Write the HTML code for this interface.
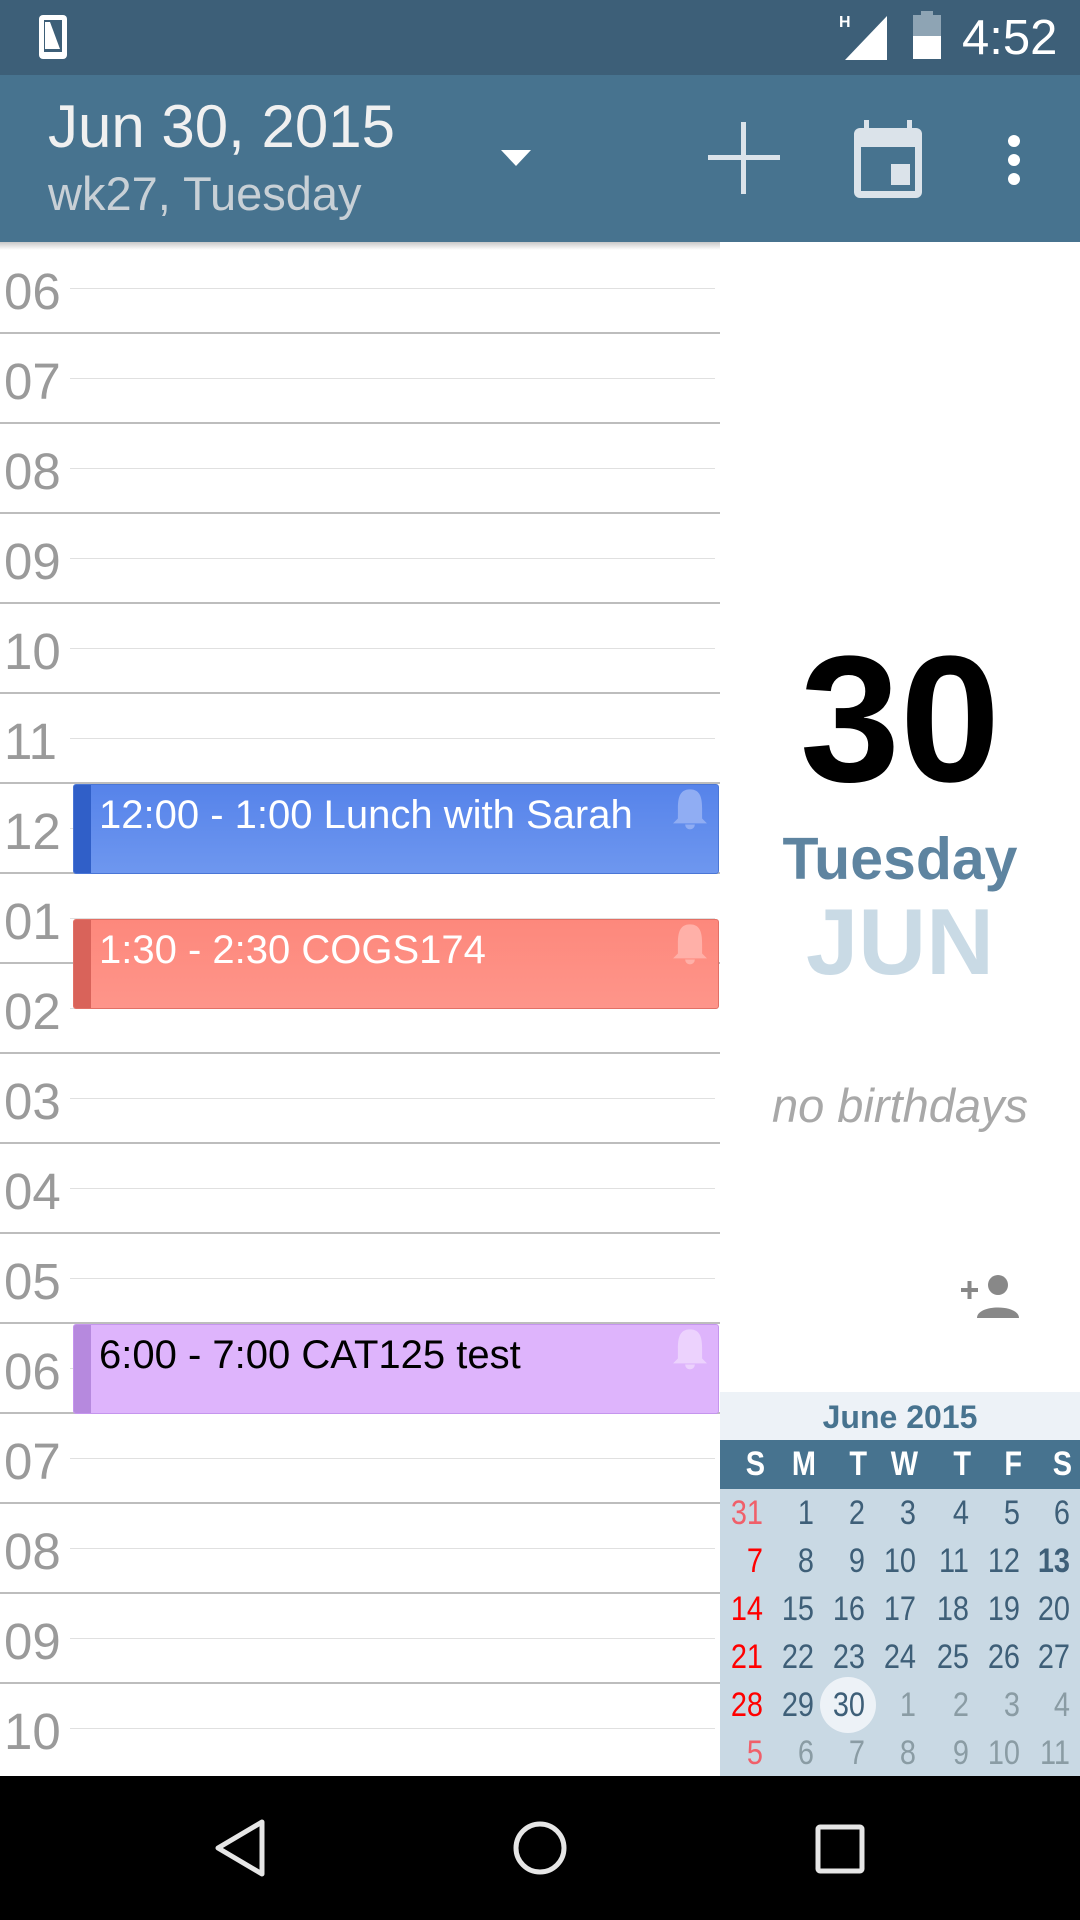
<!DOCTYPE html>
<html><head><meta charset="utf-8"><style>
*{margin:0;padding:0;box-sizing:border-box}
body{width:1080px;height:1920px;position:relative;overflow:hidden;background:#fff;font-family:"Liberation Sans",sans-serif}
.abs{position:absolute}
.lbl{position:absolute;left:4px;font-size:51px;color:#9a9a9a;line-height:1}
.maj{position:absolute;left:0;width:720px;height:2px;background:#bdbdbd}
.half{position:absolute;left:70px;width:645px;height:1px;background:#e0e0e0}
.ev{position:absolute;left:73px;width:646px;height:90px;border-radius:3px;overflow:hidden}
.ev .st{position:absolute;left:0;top:0;bottom:0;width:17px}
.ev .tx{position:absolute;left:25px;top:8px;font-size:40px;white-space:nowrap}
.ev svg{position:absolute;right:8px;top:2px}
.cal{position:absolute;left:720px;top:1392px;width:360px;height:384px;background:#c9d9e4;overflow:hidden}
.row{position:absolute;left:4px;width:360px;height:48px}
.row span{position:absolute;width:51px;text-align:right;font-size:34px;line-height:48px;color:#3e5f78;transform:scaleX(0.85);transform-origin:right}
</style></head><body>
<div class="abs" style="left:0;top:0;width:1080px;height:75px;background:#3d5f78"></div>
<svg class="abs" style="left:38px;top:14px" width="32" height="46" viewBox="0 0 32 46"><rect x="1" y="1" width="28" height="44" rx="4" fill="#fff"/><rect x="6" y="6" width="18" height="32" fill="#3d5f78"/><path d="M7 8 L12 8 L22 35 L7 35Z" fill="#fff"/></svg>
<div class="abs" style="left:839px;top:14px;font-size:16px;color:#fff;font-weight:bold">H</div>
<svg class="abs" style="left:845px;top:16px" width="44" height="44"><path d="M42 0 L42 44 L0 44Z" fill="#fff"/></svg>
<div class="abs" style="left:913px;top:15px;width:28px;height:44px;background:#fff"></div>
<div class="abs" style="left:913px;top:15px;width:28px;height:21px;background:#8ea4b4"></div>
<div class="abs" style="left:921px;top:11px;width:12px;height:5px;background:#8ea4b4"></div>
<div class="abs" style="left:962px;top:12px;font-size:49px;color:#fff;line-height:52px">4:52</div>
<div class="abs" style="left:0;top:75px;width:1080px;height:167px;background:#47738f"></div>
<div class="abs" style="left:0;top:242px;width:720px;height:8px;background:linear-gradient(#c8c8c8,#fff)"></div>
<div class="abs" style="left:48px;top:94px;font-size:60px;color:#f0f0f0;line-height:66px">Jun 30, 2015</div>
<div class="abs" style="left:48px;top:166px;font-size:47px;color:#c8d0d6;line-height:56px">wk27, Tuesday</div>
<svg class="abs" style="left:501px;top:150px" width="30" height="16"><path d="M0 0 L30 0 L15 16Z" fill="#fff"/></svg>
<svg class="abs" style="left:708px;top:122px" width="72" height="72"><rect x="33" y="0" width="5" height="72" fill="#dbe3ea"/><rect x="0" y="33" width="72" height="5" fill="#dbe3ea"/></svg>
<svg class="abs" style="left:852px;top:120px" width="72" height="80" viewBox="0 0 72 80"><rect x="12" y="0" width="5" height="14" fill="#dbe3ea"/><rect x="55" y="0" width="5" height="14" fill="#dbe3ea"/><rect x="2" y="8" width="68" height="70" rx="6" fill="#dbe3ea"/><rect x="9" y="27" width="54" height="44" fill="#47738f"/><rect x="39" y="44" width="19" height="21" fill="#dbe3ea"/></svg>
<svg class="abs" style="left:1004px;top:134px" width="20" height="52"><circle cx="10" cy="7" r="6" fill="#fff"/><circle cx="10" cy="26" r="6" fill="#fff"/><circle cx="10" cy="45" r="6" fill="#fff"/></svg>

<div class="lbl" style="top:266px">06</div><div class="half" style="top:288px"></div><div class="maj" style="top:332px"></div>
<div class="lbl" style="top:356px">07</div><div class="half" style="top:378px"></div><div class="maj" style="top:422px"></div>
<div class="lbl" style="top:446px">08</div><div class="half" style="top:468px"></div><div class="maj" style="top:512px"></div>
<div class="lbl" style="top:536px">09</div><div class="half" style="top:558px"></div><div class="maj" style="top:602px"></div>
<div class="lbl" style="top:626px">10</div><div class="half" style="top:648px"></div><div class="maj" style="top:692px"></div>
<div class="lbl" style="top:716px">11</div><div class="half" style="top:738px"></div><div class="maj" style="top:782px"></div>
<div class="lbl" style="top:806px">12</div><div class="half" style="top:828px"></div><div class="maj" style="top:872px"></div>
<div class="lbl" style="top:896px">01</div><div class="half" style="top:918px"></div><div class="maj" style="top:962px"></div>
<div class="lbl" style="top:986px">02</div><div class="half" style="top:1008px"></div><div class="maj" style="top:1052px"></div>
<div class="lbl" style="top:1076px">03</div><div class="half" style="top:1098px"></div><div class="maj" style="top:1142px"></div>
<div class="lbl" style="top:1166px">04</div><div class="half" style="top:1188px"></div><div class="maj" style="top:1232px"></div>
<div class="lbl" style="top:1256px">05</div><div class="half" style="top:1278px"></div><div class="maj" style="top:1322px"></div>
<div class="lbl" style="top:1346px">06</div><div class="half" style="top:1368px"></div><div class="maj" style="top:1412px"></div>
<div class="lbl" style="top:1436px">07</div><div class="half" style="top:1458px"></div><div class="maj" style="top:1502px"></div>
<div class="lbl" style="top:1526px">08</div><div class="half" style="top:1548px"></div><div class="maj" style="top:1592px"></div>
<div class="lbl" style="top:1616px">09</div><div class="half" style="top:1638px"></div><div class="maj" style="top:1682px"></div>
<div class="lbl" style="top:1706px">10</div><div class="half" style="top:1728px"></div>

<div class="ev" style="top:784px;background:linear-gradient(#5683ea,#6e97ef);border:1px solid #4a76d6">
<div class="st" style="background:#305fc8"></div><div class="tx" style="color:#fff">12:00 - 1:00 Lunch with Sarah</div>
<svg width="40" height="46" viewBox="0 0 30 38"><path d="M15 2 C6 2 5 10 5 18 L5 26 L1 30 L29 30 L25 26 L25 18 C25 10 24 2 15 2Z M11 31 a4 4 0 0 0 8 0Z" fill="#90adf3"/></svg></div>
<div class="ev" style="top:919px;background:linear-gradient(#fd887c,#fe958a);border:1px solid #e27066">
<div class="st" style="background:#d9635a"></div><div class="tx" style="color:#fff">1:30 - 2:30 COGS174</div>
<svg width="40" height="46" viewBox="0 0 30 38"><path d="M15 2 C6 2 5 10 5 18 L5 26 L1 30 L29 30 L25 26 L25 18 C25 10 24 2 15 2Z M11 31 a4 4 0 0 0 8 0Z" fill="#ffb0a8"/></svg></div>
<div class="ev" style="top:1324px;background:#deb4fc;border:1px solid #c595ee">
<div class="st" style="background:#b689de"></div><div class="tx" style="color:#000">6:00 - 7:00 CAT125 test</div>
<svg width="40" height="46" viewBox="0 0 30 38"><path d="M15 2 C6 2 5 10 5 18 L5 26 L1 30 L29 30 L25 26 L25 18 C25 10 24 2 15 2Z M11 31 a4 4 0 0 0 8 0Z" fill="#ecd2fd"/></svg></div>

<div class="abs" style="left:720px;top:630px;width:360px;text-align:center;font-size:180px;font-weight:bold;color:#000;line-height:180px">30</div>
<div class="abs" style="left:720px;top:824px;width:360px;text-align:center;font-size:59px;font-weight:bold;color:#5e84a0;line-height:70px">Tuesday</div>
<div class="abs" style="left:720px;top:892px;width:360px;text-align:center;font-size:94px;font-weight:bold;color:#c9dae5;line-height:100px">JUN</div>
<div class="abs" style="left:720px;top:1079px;width:360px;text-align:center;font-size:47px;font-style:italic;color:#a8a8a8;line-height:54px">no birthdays</div>
<svg class="abs" style="left:961px;top:1274px" width="58" height="44" viewBox="0 0 58 44"><rect x="0" y="14" width="17" height="4" fill="#888"/><rect x="6.5" y="7" width="4" height="18" fill="#888"/><circle cx="37" cy="11" r="10" fill="#888"/><path d="M16 44 C16 30 58 30 58 44Z" fill="#888"/></svg>

<div class="cal">
<div class="abs" style="left:0;top:0;width:360px;height:48px;background:#edf2f7;text-align:center;font-size:32px;font-weight:bold;color:#47738f;line-height:50px">June 2015</div>
<div class="abs" style="left:0;top:48px;width:360px;height:49px;background:#47738f"></div>
<div class="row" style="top:48px"><span style="left:-10px;color:#fff;font-weight:bold">S</span><span style="left:41px;color:#fff;font-weight:bold">M</span><span style="left:92px;color:#fff;font-weight:bold">T</span><span style="left:143px;color:#fff;font-weight:bold">W</span><span style="left:196px;color:#fff;font-weight:bold">T</span><span style="left:247px;color:#fff;font-weight:bold">F</span><span style="left:297px;color:#fff;font-weight:bold">S</span></div>
<div class="row" style="top:97px"><span style="left:-12px;color:#f0606a">31</span><span style="left:39px">1</span><span style="left:90px">2</span><span style="left:141px">3</span><span style="left:194px">4</span><span style="left:245px">5</span><span style="left:295px">6</span></div>
<div class="row" style="top:145px"><span style="left:-12px;color:#f00">7</span><span style="left:39px">8</span><span style="left:90px">9</span><span style="left:141px">10</span><span style="left:194px">11</span><span style="left:245px">12</span><span style="left:295px;font-weight:bold">13</span></div>
<div class="row" style="top:193px"><span style="left:-12px;color:#f00">14</span><span style="left:39px">15</span><span style="left:90px">16</span><span style="left:141px">17</span><span style="left:194px">18</span><span style="left:245px">19</span><span style="left:295px">20</span></div>
<div class="row" style="top:241px"><span style="left:-12px;color:#f00">21</span><span style="left:39px">22</span><span style="left:90px">23</span><span style="left:141px">24</span><span style="left:194px">25</span><span style="left:245px">26</span><span style="left:295px">27</span></div>
<div class="abs" style="left:100px;top:285px;width:56px;height:56px;border-radius:50%;background:#edf2f7"></div>
<div class="row" style="top:289px"><span style="left:-12px;color:#f00">28</span><span style="left:39px">29</span><span style="left:90px">30</span><span style="left:141px;color:#8a9ca4">1</span><span style="left:194px;color:#8a9ca4">2</span><span style="left:245px;color:#8a9ca4">3</span><span style="left:295px;color:#8a9ca4">4</span></div>
<div class="row" style="top:337px"><span style="left:-12px;color:#f0606a">5</span><span style="left:39px;color:#8a9ca4">6</span><span style="left:90px;color:#8a9ca4">7</span><span style="left:141px;color:#8a9ca4">8</span><span style="left:194px;color:#8a9ca4">9</span><span style="left:245px;color:#8a9ca4">10</span><span style="left:295px;color:#8a9ca4">11</span></div>
</div>

<div class="abs" style="left:0;top:1776px;width:1080px;height:144px;background:#000"></div>
<svg class="abs" style="left:212px;top:1818px" width="56" height="60"><path d="M50 4 L50 56 L6 30Z" fill="none" stroke="#e6e6e6" stroke-width="5" stroke-linejoin="round"/></svg>
<svg class="abs" style="left:512px;top:1820px" width="56" height="56"><circle cx="28" cy="28" r="24" fill="none" stroke="#e6e6e6" stroke-width="5"/></svg>
<svg class="abs" style="left:815px;top:1824px" width="50" height="50"><rect x="3" y="3" width="44" height="44" rx="2" fill="none" stroke="#e6e6e6" stroke-width="5"/></svg>
</body></html>
